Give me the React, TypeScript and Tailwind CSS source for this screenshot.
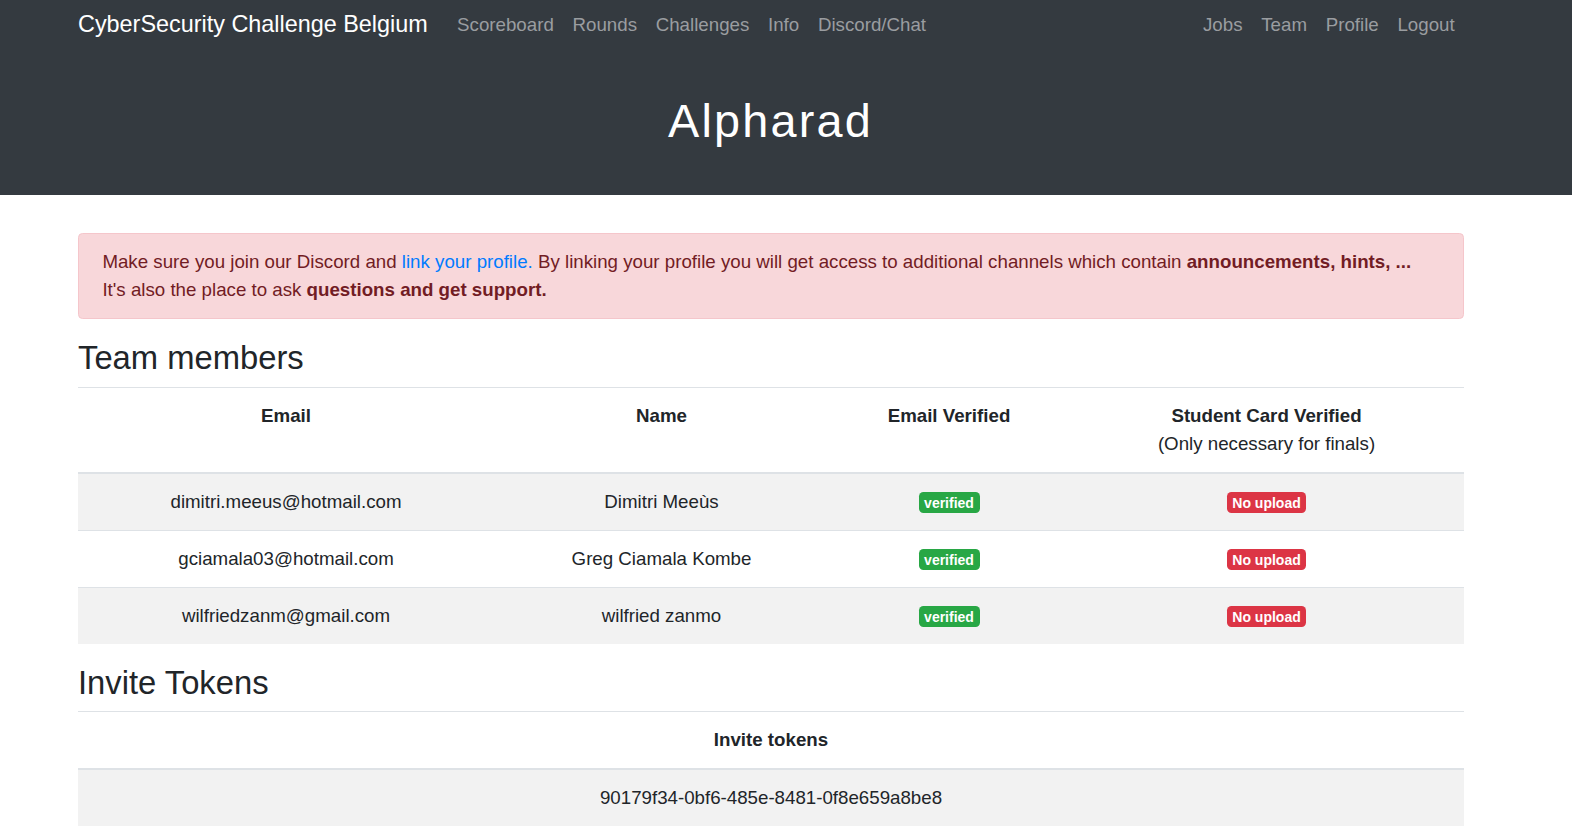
const leftLinks = ["Scoreboard", "Rounds", "Challenges", "Info", "Discord/Chat"];
const rightLinks = ["Jobs", "Team", "Profile", "Logout"];

const members = [
  { email: "dimitri.meeus@hotmail.com", name: "Dimitri Meeùs" },
  { email: "gciamala03@hotmail.com", name: "Greg Ciamala Kombe" },
  { email: "wilfriedzanm@gmail.com", name: "wilfried zanmo" },
];

function Badge({ tone, children }: { tone: "green" | "red"; children: string }) {
  return (
    <span
      className={
        "inline-block rounded-[4.5px] px-[5.6px] py-[3.5px] text-[14px] font-bold leading-[14px] text-white align-middle " +
        (tone === "green" ? "bg-[#28a745]" : "bg-[#dc3545]")
      }
    >
      {children}
    </span>
  );
}

export default function App() {
  return (
    <div className="min-h-screen bg-white text-[18.72px] leading-[28.08px] text-[#212529] font-['Liberation_Sans',Arial,sans-serif]">
      <header className="h-[195px] bg-[#343a40]">
        <nav className="ml-[78px] w-[1386px] h-[50px] flex items-center">
          <a className="text-[23.4px] text-white mr-[20px] leading-none">CyberSecurity Challenge Belgium</a>
          <div className="flex">
            {leftLinks.map((l) => (
              <a key={l} className="px-[9.36px] text-[#9a9da0]">{l}</a>
            ))}
          </div>
          <div className="flex ml-auto">
            {rightLinks.map((l) => (
              <a key={l} className="px-[9.36px] text-[#9a9da0]">{l}</a>
            ))}
          </div>
        </nav>
        <h1 className="mt-[43px] text-center text-[46.8px] leading-[56px] tracking-[2.2px] text-white pr-[31px]">Alpharad</h1>
      </header>

      <main className="ml-[78px] w-[1386px] pt-[38px]">
        <div className="rounded-[4.5px] border border-[#f5c6cb] bg-[#f8d7da] px-[23.4px] py-[14px] text-[#721c24]">
          Make sure you join our Discord and <a className="text-[#007bff]">link your profile.</a> By linking your profile you
          will get access to additional channels which contain <b>announcements, hints, ...</b>
          <br />
          It's also the place to ask <b>questions and get support.</b>
        </div>

        <h2 className="mt-[18.72px] mb-[9.36px] text-[32.76px] leading-[39.3px]">Team members</h2>
        <table className="w-full border-collapse text-center">
          <colgroup>
            <col className="w-[416px]" />
            <col className="w-[335px]" />
            <col className="w-[240px]" />
            <col />
          </colgroup>
          <thead>
            <tr className="border-t border-[#dee2e6] border-b-2 border-b-[#dee2e6]">
              <th className="py-[14px] align-top font-bold">Email</th>
              <th className="py-[14px] align-top font-bold">Name</th>
              <th className="py-[14px] align-top font-bold">Email Verified</th>
              <th className="py-[14px] align-top font-bold">
                Student Card Verified
                <br />
                <span className="font-normal">(Only necessary for finals)</span>
              </th>
            </tr>
          </thead>
          <tbody>
            {members.map((m, i) => (
              <tr key={m.email} className={"border-t border-[#dee2e6] " + (i % 2 === 0 ? "bg-[#f2f2f2]" : "")}>
                <td className="py-[14px]">{m.email}</td>
                <td className="py-[14px]">{m.name}</td>
                <td className="py-[14px]">
                  <Badge tone="green">verified</Badge>
                </td>
                <td className="py-[14px]">
                  <Badge tone="red">No upload</Badge>
                </td>
              </tr>
            ))}
          </tbody>
        </table>

        <h2 className="mt-[18.72px] mb-[9.36px] text-[32.76px] leading-[39.3px]">Invite Tokens</h2>
        <table className="w-full border-collapse text-center">
          <thead>
            <tr className="border-t border-[#dee2e6] border-b-2 border-b-[#dee2e6]">
              <th className="py-[14px] font-bold">Invite tokens</th>
            </tr>
          </thead>
          <tbody>
            <tr className="border-t border-[#dee2e6] bg-[#f2f2f2]">
              <td className="py-[14px]">90179f34-0bf6-485e-8481-0f8e659a8be8</td>
            </tr>
          </tbody>
        </table>
      </main>
    </div>
  );
}
